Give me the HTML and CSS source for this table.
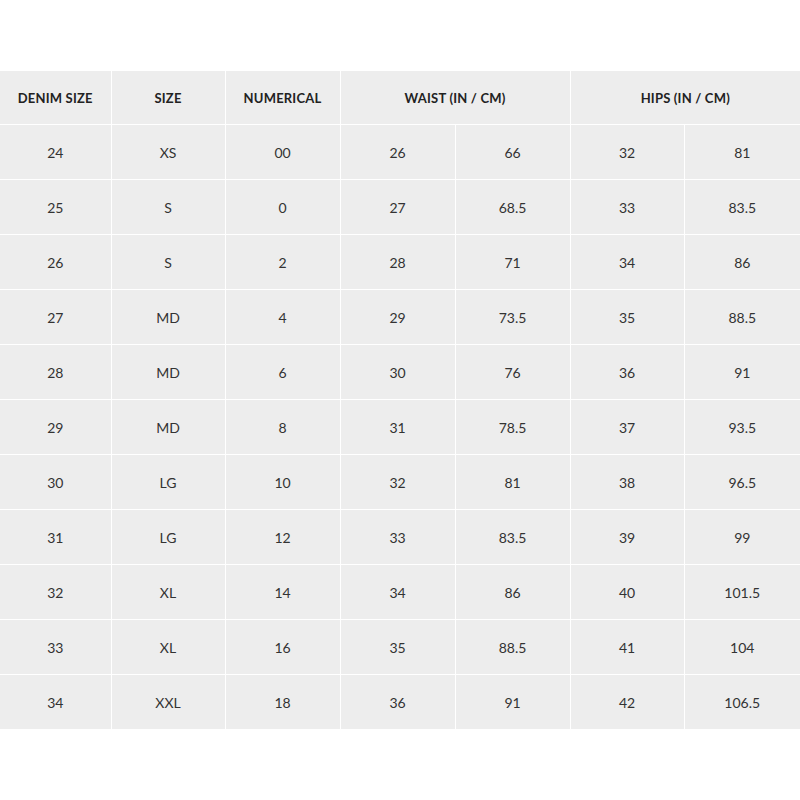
FILE: index.html
```html
<!DOCTYPE html>
<html>
<head>
<meta charset="utf-8">
<link rel="stylesheet" href="styles.css">
</head>
<body>
<div class="wrap">
<table class="size-table">
<colgroup>
<col class="c-first"><col class="c-mid"><col class="c-wide"><col class="c-wide"><col class="c-wide"><col class="c-mid"><col class="c-last">
</colgroup>
<thead>
<tr><th>DENIM SIZE</th><th>SIZE</th><th>NUMERICAL</th><th colspan="2">WAIST (IN / CM)</th><th colspan="2">HIPS (IN / CM)</th></tr>
</thead>
<tbody>
<tr><td>24</td><td>XS</td><td>00</td><td>26</td><td>66</td><td>32</td><td>81</td></tr>
<tr><td>25</td><td>S</td><td>0</td><td>27</td><td>68.5</td><td>33</td><td>83.5</td></tr>
<tr><td>26</td><td>S</td><td>2</td><td>28</td><td>71</td><td>34</td><td>86</td></tr>
<tr><td>27</td><td>MD</td><td>4</td><td>29</td><td>73.5</td><td>35</td><td>88.5</td></tr>
<tr><td>28</td><td>MD</td><td>6</td><td>30</td><td>76</td><td>36</td><td>91</td></tr>
<tr><td>29</td><td>MD</td><td>8</td><td>31</td><td>78.5</td><td>37</td><td>93.5</td></tr>
<tr><td>30</td><td>LG</td><td>10</td><td>32</td><td>81</td><td>38</td><td>96.5</td></tr>
<tr><td>31</td><td>LG</td><td>12</td><td>33</td><td>83.5</td><td>39</td><td>99</td></tr>
<tr><td>32</td><td>XL</td><td>14</td><td>34</td><td>86</td><td>40</td><td>101.5</td></tr>
<tr><td>33</td><td>XL</td><td>16</td><td>35</td><td>88.5</td><td>41</td><td>104</td></tr>
<tr><td>34</td><td>XXL</td><td>18</td><td>36</td><td>91</td><td>42</td><td>106.5</td></tr>
</tbody>
</table>
</div>
</body>
</html>
```
FILE: styles.css
```css
html, body {
  margin: 0;
  padding: 0;
  background: #ffffff;
}
.wrap {
  padding-top: 71px;
}
.size-table {
  width: 800px;
  border-collapse: collapse;
  table-layout: fixed;
  font-family: Lato, "Open Sans", sans-serif;
}
.c-first { width: 111px; }
.c-mid { width: 114px; }
.c-wide { width: 115px; }
.c-last { width: 116px; }
.size-table th,
.size-table td {
  background: #ededed;
  border: 1px solid #ffffff;
  text-align: center;
  vertical-align: middle;
  padding: 0;
}
.size-table tr > :first-child { border-left: none; }
.size-table tr > :last-child { border-right: none; }
.size-table th {
  height: 53px;
  font-size: 13px;
  font-weight: 700;
  color: #222222;
  letter-spacing: 0.2px;
  border-top: none;
}
.size-table td {
  height: 54px;
  font-size: 14px;
  font-weight: 400;
  color: #333333;
}
.size-table tbody tr:last-child td { border-bottom: none; }
```
